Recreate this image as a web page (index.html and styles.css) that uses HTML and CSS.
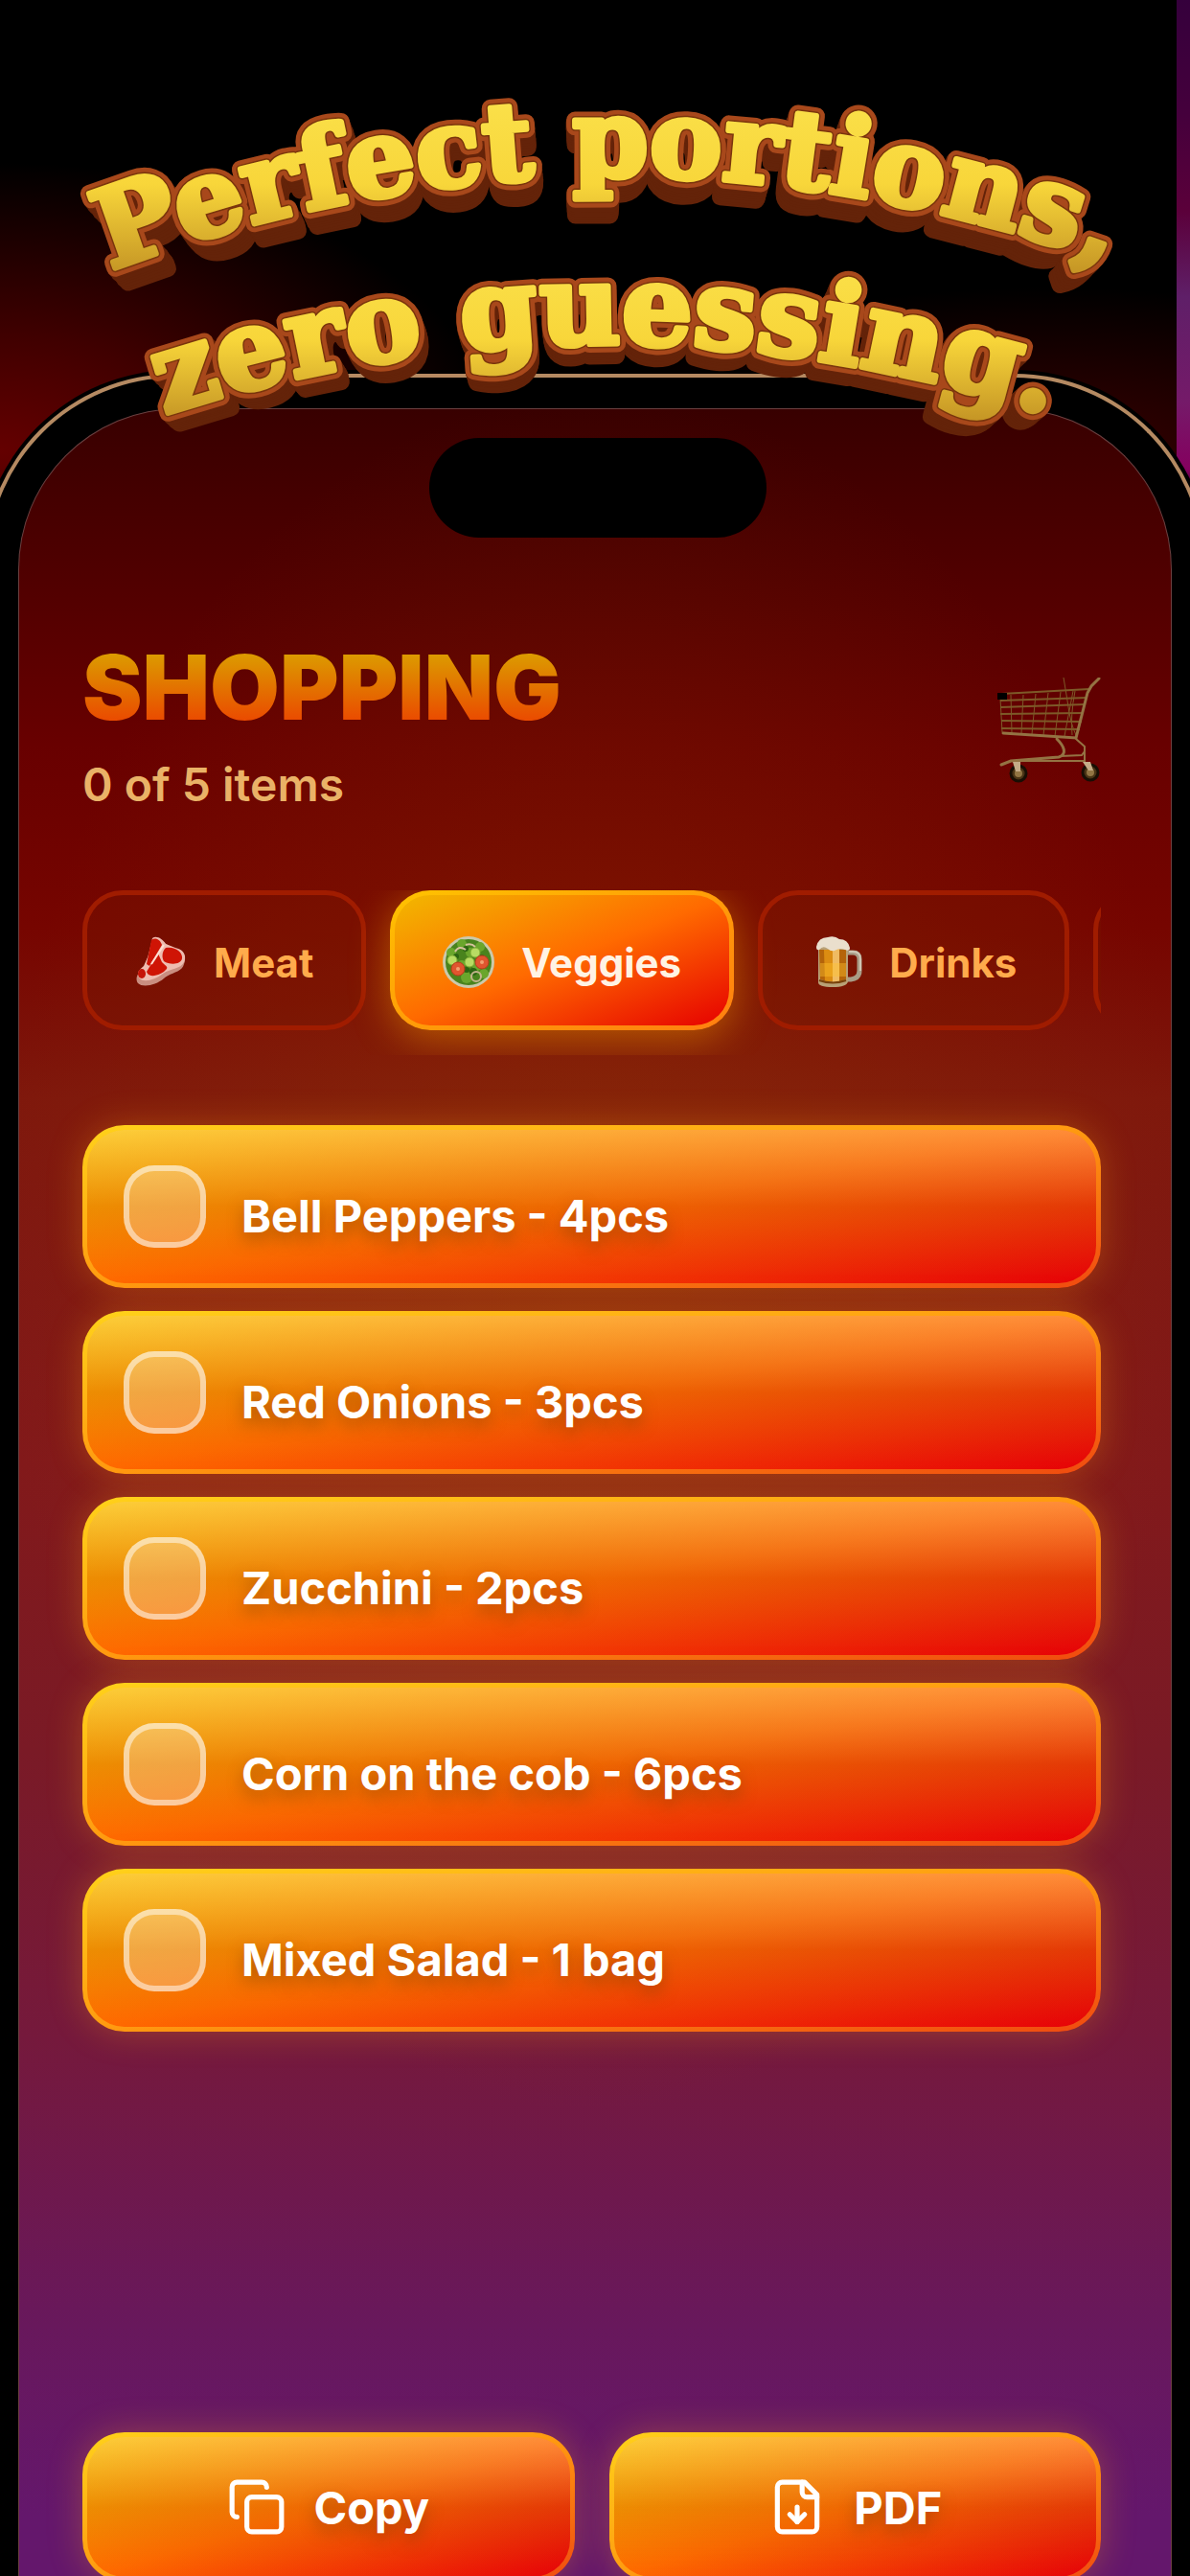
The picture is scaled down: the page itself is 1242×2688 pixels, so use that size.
FILE: index.html
```
<!DOCTYPE html>
<html lang="en">
<head>
    <meta charset="UTF-8">
    <meta name="viewport" content="width=device-width, initial-scale=1.0">
    <title>Shopping list</title>
    <link rel="stylesheet" href="styles.css">
</head>
<body>

<div class="page">
    <h1 class="headline">
        <svg viewBox="0 0 1242 480" role="img" aria-label="Perfect portions, zero guessing.">
            <defs>
                <linearGradient id="gold" x1="0" y1="0" x2="0" y2="1">
                    <stop offset="0" stop-color="#fbe34e"/>
                    <stop offset="0.5" stop-color="#f8d63a"/>
                    <stop offset="1" stop-color="#b98620"/>
                </linearGradient>
                <path id="arcTop" d="M95 290 A1480 1480 0 0 1 1195 290"/>
                <path id="arcBottom" d="M132 446 A1480 1480 0 0 1 1132 446"/>
                <g id="words">
                    <text class="top"><textPath href="#arcTop" startOffset="22">Perfect portions,</textPath></text>
                    <text><textPath href="#arcBottom" startOffset="42">zero guessing.</textPath></text>
                </g>
            </defs>
            <!-- extruded sides, all drawn towards the same vanishing point -->
            <g class="side">
                <use href="#words" transform="translate(17 23) scale(0.972)"/>
                <use href="#words" transform="translate(15 20) scale(0.976)"/>
                <use href="#words" transform="translate(12 17) scale(0.98)"/>
                <use href="#words" transform="translate(10 13) scale(0.984)"/>
                <use href="#words" transform="translate(7 10) scale(0.988)"/>
                <use href="#words" transform="translate(5 7) scale(0.992)"/>
                <use href="#words" transform="translate(2 3) scale(0.996)"/>
            </g>
            <use class="rim" href="#words"/>
            <use class="groove" href="#words"/>
            <g class="face">
                <text class="top" fill="url(#gold)" stroke="url(#gold)"><textPath href="#arcTop" startOffset="22">Perfect portions,</textPath></text>
                <text fill="url(#gold)" stroke="url(#gold)"><textPath href="#arcBottom" startOffset="42">zero guessing.</textPath></text>
            </g>
        </svg>
    </h1>

    <div class="phone">
        <div class="screen">
            <div class="island"></div>

            <header class="header">
                <div>
                    <h2>SHOPPING</h2>
                    <p>0 of 5 items</p>
                </div>
                <svg class="cart" viewBox="0 0 108 110" aria-hidden="true">
                    <g fill="none" stroke="#7d5a28" stroke-width="2">
                        <path d="M4 17 L96 12 M3 24 L94 21 M3 31 L92 28 M3 38 L90 37 M4 45 L88 46 M4 53 L86 54"/>
                        <path d="M3 22 L5 57 M14 18 L15 58 M27 18 L25 58 M40 17 L36 59 M53 16 L48 60 M66 15 L60 61 M79 14 L70 61" stroke-width="1"/>
                        <path d="M69 0 L73 24 Q76 48 82 60 M81 14 Q76 40 78 60" stroke-width="1"/>
                    </g>
                    <g fill="none" stroke="#947343" stroke-width="3" stroke-linecap="round">
                        <path d="M106 1 L98 9 L94 16 L82 63 L6 58"/>
                        <path d="M62 64 C70 72 73 80 64 83 L14 87 L4 91"/>
                        <path d="M82 64 L91 72 L91 87 L14 87 M66 82 L88 81 L91 77" stroke-width="2"/>
                    </g>
                    <path d="M0 16 h10 v7 h-10z"/>
                    <g fill="#4a3415" stroke="#180e04" stroke-width="3">
                        <circle cx="22" cy="100" r="8"/>
                        <circle cx="97" cy="99" r="8"/>
                    </g>
                    <g fill="#927543">
                        <circle cx="22" cy="100" r="4"/>
                        <circle cx="97" cy="99" r="4"/>
                        <path d="M16 88 h8 l0 10 h-5z M89 88 h8 l3 9 h-5z" fill="#c4ab87"/>
                    </g>
                </svg>
            </header>

            <nav class="tabs">
                <button class="tab" type="button">
                    <svg class="emoji" viewBox="0 0 54 54" aria-hidden="true">
                        <path d="M18 4 C22 0 28 3 32 8 L42 13 C51 14 54 22 51 29 C49 38 36 38 30 44 C22 51 8 54 3 49 C-1 43 4 37 9 33 L13 22 Z" fill="#c98e80"/>
                        <path d="M18 2 C22 -1 28 2 32 8 L42 12 C51 14 54 20 51 27 C48 34 36 34 29 39 C20 46 8 49 4 43 C1 37 5 35 9 31 L14 20 Z" fill="#eebcb0"/>
                        <path d="M17 4 C21 1 26 3 28 9 L15 31 L12 29 Z M32 12 C42 10 50 17 49 23 C48 30 36 30 30 26 C27 20 29 15 32 12Z M24 18 L28 27 C33 32 36 32 30 37 C22 42 14 43 12 37 L15 32Z" fill="#cf1405"/>
                        <ellipse cx="7" cy="39" rx="4" ry="5" fill="#c51307"/>
                        <path d="M17 29 L30 9" stroke="#ffded2" stroke-width="2"/>
                    </svg>
                    Meat
                </button>
                <button class="tab active" type="button" aria-pressed="true">
                    <svg class="emoji" viewBox="0 0 54 54" aria-hidden="true">
                        <circle cx="27" cy="27" r="27" fill="#cbc9ab"/>
                        <circle cx="27" cy="27" r="24" fill="#49831d"/>
                        <g fill="#6aa62c">
                            <circle cx="20" cy="8" r="5"/><circle cx="39" cy="11" r="5"/><circle cx="9" cy="17" r="5"/><circle cx="29" cy="17" r="5"/>
                            <circle cx="20" cy="29" r="4"/><circle cx="43" cy="39" r="5"/><circle cx="25" cy="43" r="6"/><circle cx="36" cy="31" r="5"/>
                        </g>
                        <g fill="#2c6412">
                            <circle cx="24" cy="13" r="3"/><circle cx="14" cy="21" r="3"/><circle cx="32" cy="37" r="4"/><circle cx="25" cy="35" r="3"/><circle cx="41" cy="21" r="2"/>
                        </g>
                        <g fill="#b8dc63" stroke="#83ae37" stroke-width="1">
                            <circle cx="10" cy="25" r="5"/><circle cx="28" cy="27" r="5"/><circle cx="34" cy="17" r="5"/>
                        </g>
                        <g fill="#e0552f" stroke="#b93c1b" stroke-width="1">
                            <circle cx="16" cy="34" r="7"/><circle cx="41" cy="27" r="7"/>
                        </g>
                        <circle cx="16" cy="34" r="2" fill="#f2a070"/>
                        <circle cx="41" cy="27" r="2" fill="#f2a070"/>
                        <path d="M13 16 Q17 9 24 14 M24 9 Q30 7 34 11" fill="none" stroke="#d6c19c" stroke-width="2"/>
                        <circle cx="35" cy="42" r="5" fill="none" stroke="#c3b48b" stroke-width="2"/>
                    </svg>
                    Veggies
                </button>
                <button class="tab" type="button">
                    <svg class="emoji" viewBox="-4 0 54 54" aria-hidden="true">
                        <path d="M34 17 H40 Q47 17 47 24 V36 Q47 44 38 45 L34 45" fill="none" stroke="#a89c86" stroke-width="5"/>
                        <path d="M36 16 H40 Q48 16 48 24 V36" fill="none" stroke="#d0c6b4" stroke-width="2"/>
                        <path d="M4 10 H35 V47 Q34 53 19 53 Q4 53 4 48Z" fill="#b9a176"/>
                        <path d="M5 14 H33 V45 Q19 50 6 45Z" fill="#b5640a"/>
                        <path d="M10 14 H20 V47 H11Z" fill="#dc8c12"/>
                        <path d="M19 13 H26 V48 H19Z" fill="#f0bb62"/>
                        <path d="M6 28 H33 V42 H6Z" fill="#ffc42e" opacity="0.4"/>
                        <path d="M5 46 Q19 51 33 46" fill="none" stroke="#78410b" stroke-width="2"/>
                        <path d="M2 11 Q4 1 14 1 Q21 -1 26 3 Q35 3 37 12 Q37 16 32 14 Q27 12 23 14 Q18 17 14 13 Q9 9 5 14 Q2 15 2 11Z" fill="#eadfcd"/>
                    </svg>
                    Drinks
                </button>
                <button class="tab" type="button" aria-label="More"></button>
            </nav>

            <ul class="items">
                <li><label class="item"><input type="checkbox"><span>Bell Peppers - 4pcs</span></label></li>
                <li><label class="item"><input type="checkbox"><span>Red Onions - 3pcs</span></label></li>
                <li><label class="item"><input type="checkbox"><span>Zucchini - 2pcs</span></label></li>
                <li><label class="item"><input type="checkbox"><span>Corn on the cob - 6pcs</span></label></li>
                <li><label class="item"><input type="checkbox"><span>Mixed Salad - 1 bag</span></label></li>
            </ul>

            <div class="actions">
                <button class="action" type="button">
                    <svg viewBox="0 0 24 24" aria-hidden="true">
                        <rect x="8" y="8" width="14" height="14" rx="2"/>
                        <path d="M4 16c-1.1 0-2-.9-2-2V4c0-1.1.9-2 2-2h10c1.1 0 2 .9 2 2"/>
                    </svg>
                    Copy
                </button>
                <button class="action" type="button">
                    <svg viewBox="0 0 24 24" aria-hidden="true">
                        <path d="M15 2H6a2 2 0 0 0-2 2v16a2 2 0 0 0 2 2h12a2 2 0 0 0 2-2V7Z"/>
                        <path d="M14 2v4a2 2 0 0 0 2 2h4"/>
                        <path d="M12 18v-6"/>
                        <path d="m9 15 3 3 3-3"/>
                    </svg>
                    PDF
                </button>
            </div>
        </div>
    </div>
</div>

</body>
</html>
```
FILE: styles.css
```
* {
    box-sizing: border-box;
}
body {
    margin: 0;
    font-family: Inter, sans-serif;
    background-color: #000;
}
.page {
    position: relative;
    min-height: 100vh;
    padding-top: 390px;
    overflow: hidden;
    background:
        linear-gradient(#35003c, #45003c 120px, #5b003a 220px, #5f1f68 310px, #751a69 420px, #85005f 490px, #000 530px) right top / 14px 530px no-repeat,
        radial-gradient(ellipse 520px 300px at 0 470px, #640000, #400000 40%, rgba(0, 0, 0, 0)) no-repeat,
        radial-gradient(ellipse 500px 170px at 88% 470px, #380000, rgba(0, 0, 0, 0)) no-repeat,
        #000;
}

/* arched 3D headline, lies over the top of the phone */
.headline {
    position: absolute;
    top: 0;
    left: 0;
    z-index: 1;
    width: 100%;
    margin: 0;
}
.headline svg {
    display: block;
    width: 100%;
    overflow: visible;
}
.headline text {
    font-family: "DejaVu Serif", serif;
    font-size: 116px;
    font-weight: bold;
    stroke-linejoin: round;
}
.headline .top {
    font-size: 113px;
}
.side {
    fill: #642309;
    stroke: #642309;
    stroke-width: 18px;
}
.rim {
    fill: #a8481b;
    stroke: #a8481b;
    stroke-width: 18px;
}
.groove {
    fill: #7a350c;
    stroke: #7a350c;
    stroke-width: 9px;
}
.face {
    stroke-width: 6px;
}

.phone {
    margin: 0 -17px;
    padding: 32px;
    border: 4px solid #b58a62;
    border-bottom: 0;
    border-radius: 200px 200px 0 0;
    box-shadow: 0 0 0 4px #000;
    background: #000;
}
.screen {
    display: flex;
    flex-direction: column;
    padding: 30px 73px 0 66px;
    border-radius: 168px 168px 0 0;
    border: 1px solid #6b4040;
    border-bottom: 0;
    background:
        radial-gradient(ellipse 620px 900px at 50% 880px, rgba(150, 64, 0, 0.35), rgba(150, 64, 0, 0)),
        linear-gradient(#380000, #680000 350px, #760500 540px, #7f180c 720px, #82191a 1100px, #7a1a26 1400px, #75193c 1700px, #68185c 2000px, #64176c 2200px);
}
.island {
    align-self: center;
    width: 352px;
    height: 104px;
    margin-left: 12px;
    border-radius: 52px;
    background: #000;
}

.header {
    display: flex;
    justify-content: space-between;
    align-items: center;
    margin-top: 108px;
}
.header h2 {
    margin: 0;
    font-size: 94px;
    font-weight: 900;
    line-height: 96px;
    background: linear-gradient(#dc9a00 15%, #ea4c00 85%);
    -webkit-background-clip: text;
    background-clip: text;
    color: transparent;
}
.header p {
    margin: 24px 0 0;
    font-size: 48px;
    font-weight: 600;
    line-height: 60px;
    color: #eab267;
}
.cart {
    width: 108px;
    height: 110px;
    margin-top: 6px;
}

.tabs {
    display: flex;
    gap: 25px;
    margin-top: 80px;
    padding-bottom: 26px;
    overflow: hidden;
}
.tab {
    display: flex;
    flex-shrink: 0;
    align-items: center;
    gap: 28px;
    height: 146px;
    padding: 4px 50px 0;
    border: 5px solid #a01c00;
    border-radius: 42px;
    background: rgba(120, 24, 0, 0.3);
    color: #ffab4c;
    font: 700 42px Inter, sans-serif;
}
.tab.active {
    border-color: transparent;
    background:
        linear-gradient(to bottom right, #f2b800, #ff6a00 50%, #e60000) padding-box,
        linear-gradient(to bottom right, #ffc400, #ff9c08 50%, #ff7e10) border-box;
    box-shadow: 0 8px 40px rgba(255, 170, 0, 0.45);
    color: #fff3e4;
}
.emoji {
    width: 54px;
    height: 54px;
}

.items {
    display: flex;
    flex-direction: column;
    gap: 24px;
    margin: 73px 0 0;
    padding: 0;
    list-style: none;
}
.item, .action {
    display: flex;
    align-items: center;
    border: 5px solid transparent;
    border-radius: 44px;
    background:
        linear-gradient(rgba(255, 255, 255, 0.22), rgba(120, 80, 20, 0.12) 50%, rgba(120, 80, 20, 0)) padding-box,
        linear-gradient(to bottom right, #fbc000, #ff6a00 50%, #e60008) padding-box,
        linear-gradient(to bottom right, #ffd21a, #ff9a10 50%, #f04a10) border-box;
    box-shadow: 0 0 36px rgba(255, 160, 20, 0.3);
    color: #fff;
    font: 700 47px Inter, sans-serif;
    text-shadow: 0 8px 16px rgba(120, 60, 0, 0.5);
}
.item {
    height: 170px;
    padding: 0 38px;
    gap: 37px;
}
.item input {
    appearance: none;
    width: 86px;
    height: 86px;
    margin: 0;
    border: 6px solid rgba(255, 255, 255, 0.5);
    border-radius: 32px;
    background: rgba(255, 255, 255, 0.25);
}
.item span {
    padding-top: 18px;
}

.actions {
    display: grid;
    grid-template-columns: 1fr 1fr;
    gap: 36px;
    margin-top: 418px;
}
.action {
    justify-content: center;
    height: 156px;
    gap: 28px;
}
.action svg {
    width: 62px;
    height: 62px;
    fill: none;
    stroke: #fff;
    stroke-width: 2;
    stroke-linecap: round;
    stroke-linejoin: round;
}
```
